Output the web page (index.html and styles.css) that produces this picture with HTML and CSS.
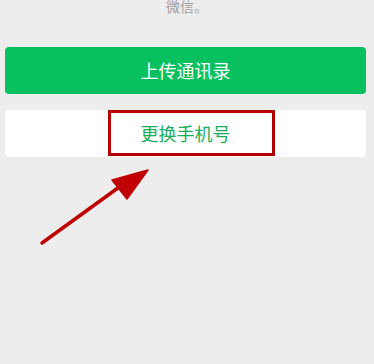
FILE: index.html
```html
<!DOCTYPE html>
<html lang="zh">
<head>
<meta charset="utf-8">
<link rel="stylesheet" href="styles.css">
</head>
<body>
<div class="page">
  <p class="hint">微信。</p>
  <div class="btn btn-primary">上传通讯录</div>
  <div class="btn btn-default">
    更换手机号
    <span class="mark"></span>
  </div>
  <svg class="arrow" width="374" height="364" viewBox="0 0 374 364">
    <line x1="42" y1="243" x2="122" y2="185" stroke="#c00000" stroke-width="3.5" stroke-linecap="round"/>
    <polygon points="148,170 112,180 127,199" fill="#c00000" stroke="#c00000" stroke-width="1.5" stroke-linejoin="round"/>
  </svg>
</div>
</body>
</html>
```
FILE: styles.css
```css
html, body {
  margin: 0;
  padding: 0;
  background: #ededed;
}
.page {
  position: relative;
  width: 374px;
  height: 364px;
  overflow: hidden;
  font-family: "Noto Sans CJK SC", "Noto Sans", sans-serif;
}
.hint {
  margin: -4px 0 0 0;
  height: 20px;
  line-height: 20px;
  text-align: center;
  font-size: 14px;
  color: #a0a0a0;
}
.btn {
  position: relative;
  margin-left: 5px;
  width: 361px;
  height: 47px;
  border-radius: 4px;
  font-size: 18px;
  line-height: 47px;
  text-align: center;
}
.btn-primary {
  margin-top: 31px;
  background: #07c160;
  color: #fff;
}
.btn-default {
  margin-top: 16px;
  background: #fff;
  color: #1aad5a;
}
.mark {
  position: absolute;
  left: 103px;
  top: 0;
  width: 161px;
  height: 40px;
  border: 3.5px solid #b30000;
}
.arrow {
  position: absolute;
  left: 0;
  top: 0;
}
```
